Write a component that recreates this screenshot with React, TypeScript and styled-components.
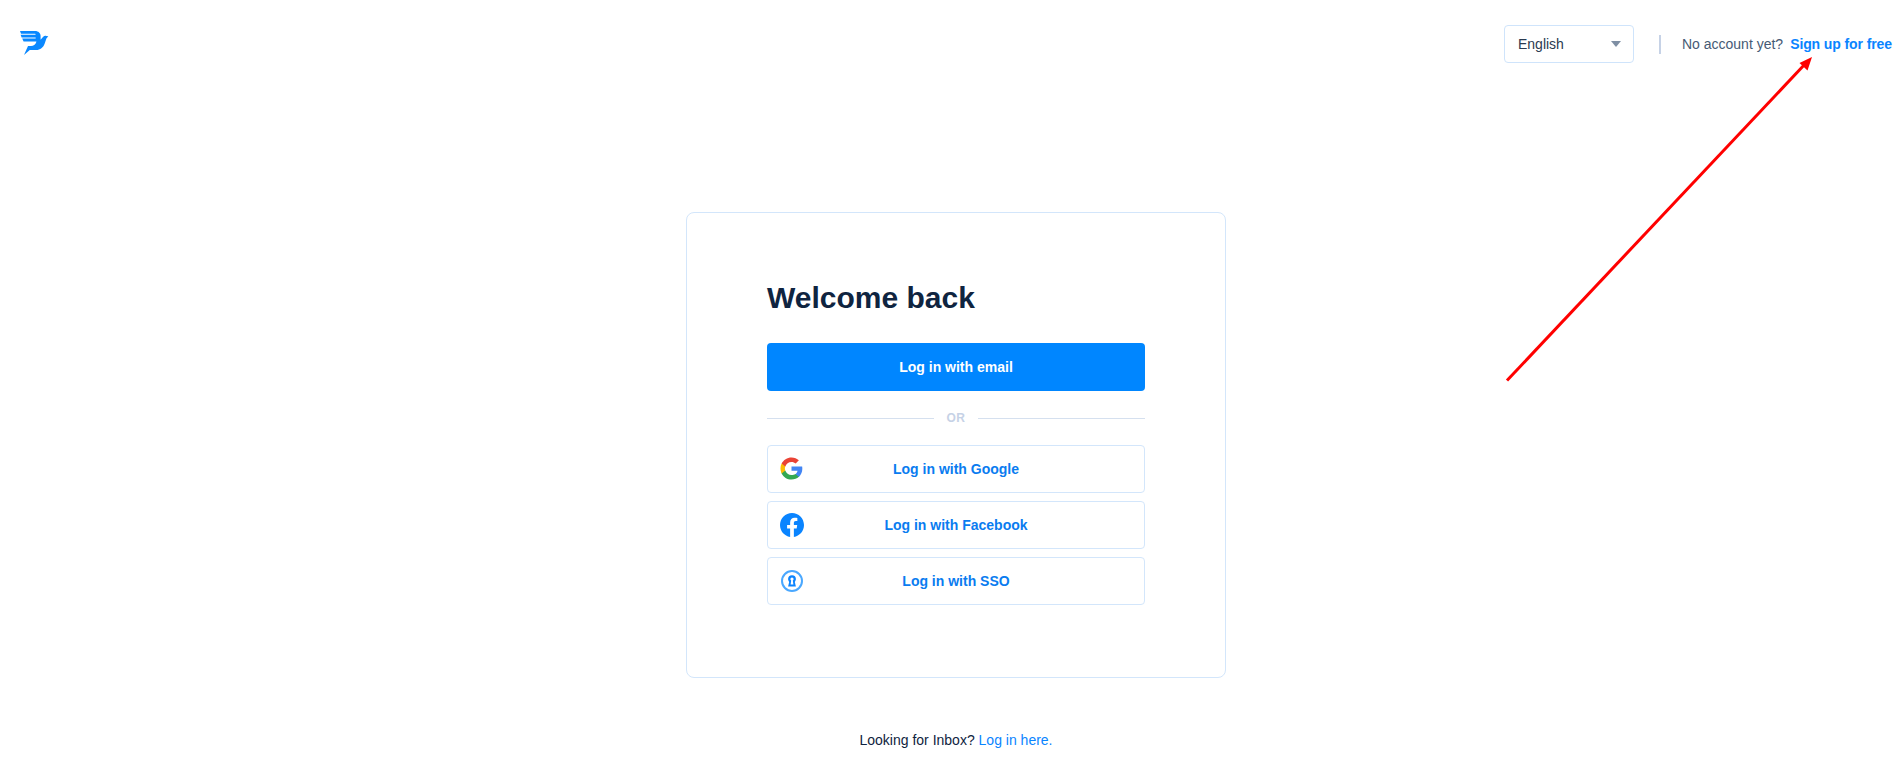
import React from "react";
import styled, { createGlobalStyle } from "styled-components";

const Global = createGlobalStyle`
  html, body { margin: 0; padding: 0; background: #fff; }
  body { font-family: "Liberation Sans", Arial, sans-serif; color: #0f2440; }
  * { box-sizing: border-box; }
`;

const Page = styled.div`
  position: relative;
  width: 1901px;
  height: 783px;
  overflow: hidden;
`;

const Header = styled.header`
  display: flex;
  align-items: flex-start;
  justify-content: space-between;
  height: 212px;
  padding: 25px 9px 0 20px;
`;

const LogoLink = styled.a`
  display: block;
  margin-top: 6px;
  width: 29px;
  height: 24px;
  svg { display: block; }
`;

const HeaderRight = styled.div`
  display: flex;
  align-items: center;
  height: 38px;
`;

const LangSelect = styled.div`
  display: flex;
  align-items: center;
  justify-content: space-between;
  width: 130px;
  height: 38px;
  padding: 0 12px 0 13px;
  border: 1px solid #cfe4fb;
  border-radius: 4px;
  font-size: 14px;
  color: #2a3a50;
`;

const Caret = styled.span`
  width: 0;
  height: 0;
  border-left: 5px solid transparent;
  border-right: 5px solid transparent;
  border-top: 6px solid #7f8fa4;
`;

const Divider = styled.span`
  width: 2px;
  height: 19px;
  margin: 0 21px 0 25px;
  background: #c6d2e6;
`;

const Prompt = styled.span`
  font-size: 14px;
  color: #465a75;
`;

const SignUp = styled.a`
  margin-left: 7px;
  font-size: 14px;
  font-weight: 700;
  letter-spacing: -0.1px;
  color: #0a84ff;
`;

const Main = styled.main`
  display: flex;
  flex-direction: column;
  align-items: center;
  padding-left: 11px;
`;

const Card = styled.section`
  width: 540px;
  height: 466px;
  padding: 67px 80px 0;
  border: 1px solid #d3e6fb;
  border-radius: 8px;
`;

const Title = styled.h1`
  margin: 0 0 28px;
  font-size: 30px;
  line-height: 35px;
  font-weight: 700;
  color: #0f2440;
`;

const PrimaryButton = styled.button`
  display: block;
  width: 100%;
  height: 48px;
  border: 0;
  border-radius: 4px;
  background: #0086ff;
  color: #fff;
  font: 700 14px "Liberation Sans", Arial, sans-serif;
`;

const OrRow = styled.div`
  display: flex;
  align-items: center;
  gap: 13px;
  height: 54px;
  font-size: 12px;
  font-weight: 700;
  letter-spacing: 0.4px;
  color: #c6d2e6;
  &::before, &::after {
    content: "";
    flex: 1;
    height: 1px;
    background: #d5e0ef;
  }
`;

const Stack = styled.div`
  display: flex;
  flex-direction: column;
  gap: 8px;
`;

const OutlineButton = styled.button`
  position: relative;
  display: flex;
  align-items: center;
  justify-content: center;
  width: 100%;
  height: 48px;
  border: 1px solid #d3e6fb;
  border-radius: 4px;
  background: #fff;
  color: #0a7cf0;
  font: 700 14px "Liberation Sans", Arial, sans-serif;
`;

const IconSlot = styled.span`
  position: absolute;
  left: 12px;
  top: 11px;
  width: 24px;
  height: 24px;
  display: block;
  svg { display: block; }
`;

const Footer = styled.p`
  margin: 54px 0 0;
  font-size: 14px;
  line-height: 16px;
  color: #0f2440;
`;

const FooterLink = styled.a`
  color: #0a84ff;
`;

const ArrowOverlay = styled.svg`
  position: absolute;
  left: 0;
  top: 0;
  pointer-events: none;
`;

const Logo = () => (
  <svg width="29" height="24" viewBox="0 0 29 24">
    <path
      fill="#0a88ff"
      fillRule="evenodd"
      d="M0 0H15C18.5 0 20.6 2.2 20.6 4.8V8.8L23 6C24 4.9 25.3 4.5 26.4 5L28.3 5.2L26.4 7.4L24.8 12.2C23.4 16.6 20 19 16.4 19H9.8L4 24L8 15H11C13.4 15 15.6 13.4 16.2 11.2L16.4 10.4H3.6L2.2 7.6H15.2C16.2 7.6 16.2 6.6 15.2 6.6H1.6L0.6 3.8H15C16 3.8 16 2.8 15 2.8H1Z"
    />
  </svg>
);

const GoogleIcon = () => (
  <svg width="23" height="23" viewBox="0 0 24 24">
    <path fill="#4285F4" d="M23.3 12.3c0-.8-.1-1.6-.2-2.3H12v4.4h6.3c-.3 1.5-1.1 2.7-2.3 3.5v2.9h3.7c2.2-2 3.6-5 3.6-8.5z" />
    <path fill="#34A853" d="M12 23.5c3.1 0 5.7-1 7.7-2.8L16 17.8c-1 .7-2.4 1.1-4 1.1-3 0-5.6-2-6.5-4.8H1.7v3c1.9 3.8 5.8 6.4 10.3 6.4z" />
    <path fill="#FBBC05" d="M5.5 14.1c-.2-.7-.4-1.4-.4-2.1s.1-1.5.4-2.1V6.9H1.7C.9 8.4.5 10.2.5 12s.4 3.6 1.2 5.1l3.8-3z" />
    <path fill="#EA4335" d="M12 5.1c1.7 0 3.2.6 4.4 1.7l3.3-3.3C17.7 1.6 15.1.5 12 .5 7.5.5 3.6 3.1 1.7 6.9l3.8 3C6.4 7.1 9 5.1 12 5.1z" />
  </svg>
);

const FacebookIcon = () => (
  <svg width="24" height="24" viewBox="0 0 24 24">
    <path fill="#0a84ff" d="M24 12.07C24 5.4 18.63 0 12 0S0 5.4 0 12.07c0 6.03 4.39 11.02 10.13 11.93v-8.44H7.08v-3.49h3.05V9.41c0-3.02 1.79-4.69 4.53-4.69 1.31 0 2.68.24 2.68.24v2.97h-1.51c-1.49 0-1.96.93-1.96 1.89v2.25h3.33l-.53 3.49h-2.8V24C19.61 23.09 24 18.1 24 12.07z" />
  </svg>
);

const SsoIcon = () => (
  <svg width="24" height="24" viewBox="0 0 24 24" fill="none">
    <circle cx="12" cy="12" r="10" stroke="#4aa8ff" strokeWidth="2" />
    <path
      fill="#0a84ff"
      fillRule="evenodd"
      d="M12 6.2A3.9 3.9 0 0 1 15.9 10.1C15.9 11.3 15.4 12.2 14.8 12.9L15.9 17.6H8.1L9.2 12.9C8.6 12.2 8.1 11.3 8.1 10.1A3.9 3.9 0 0 1 12 6.2ZM12 8.5A1.6 1.6 0 0 0 10.4 10.1C10.4 10.8 10.8 11.3 11.2 11.6L10.6 15.6H13.4L12.8 11.6C13.2 11.3 13.6 10.8 13.6 10.1A1.6 1.6 0 0 0 12 8.5Z"
    />
  </svg>
);

export default function App() {
  return (
    <Page>
      <Global />
      <Header>
        <LogoLink aria-label="Home"><Logo /></LogoLink>
        <HeaderRight>
          <LangSelect>English<Caret /></LangSelect>
          <Divider />
          <Prompt>No account yet?</Prompt>
          <SignUp>Sign up for free</SignUp>
        </HeaderRight>
      </Header>
      <Main>
        <Card>
          <Title>Welcome back</Title>
          <PrimaryButton>Log in with email</PrimaryButton>
          <OrRow>OR</OrRow>
          <Stack>
            <OutlineButton><IconSlot><GoogleIcon /></IconSlot>Log in with Google</OutlineButton>
            <OutlineButton><IconSlot><FacebookIcon /></IconSlot>Log in with Facebook</OutlineButton>
            <OutlineButton><IconSlot><SsoIcon /></IconSlot>Log in with SSO</OutlineButton>
          </Stack>
        </Card>
        <Footer>Looking for Inbox? <FooterLink>Log in here.</FooterLink></Footer>
      </Main>
      <ArrowOverlay width="1901" height="783" viewBox="0 0 1901 783">
        <line x1="1507" y1="380.5" x2="1806" y2="63" stroke="#ff0000" strokeWidth="3" />
        <path d="M1812 57L1807.5 70.5L1799.5 63Z" fill="#ff0000" />
      </ArrowOverlay>
    </Page>
  );
}
